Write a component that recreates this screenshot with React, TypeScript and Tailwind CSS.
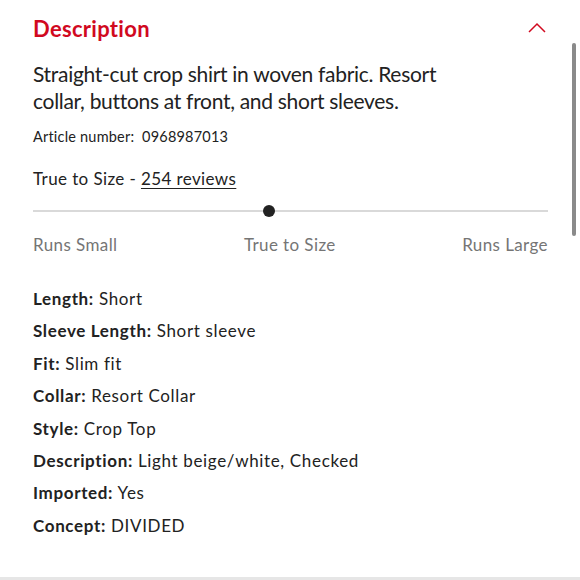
import React from "react";

const specs: [string, string][] = [
  ["Length", "Short"],
  ["Sleeve Length", "Short sleeve"],
  ["Fit", "Slim fit"],
  ["Collar", "Resort Collar"],
  ["Style", "Crop Top"],
  ["Description", "Light beige/white, Checked"],
  ["Imported", "Yes"],
  ["Concept", "DIVIDED"],
];

export default function App() {
  return (
    <div className="relative h-[580px] w-[580px] overflow-hidden bg-white font-['Lato',sans-serif] text-[#222]">
      <div className="px-[33px] pr-[32px] pt-[13px]">
        <div className="flex h-[30px] items-center justify-between">
          <h2 className="text-[22px] font-bold tracking-[0.3px] text-[#d1091f]">Description</h2>
          <svg width="18" height="12" viewBox="0 0 18 12" className="mr-[2px] text-[#d1091f]">
            <path d="M1 10 L9 2 L17 10" fill="none" stroke="currentColor" strokeWidth="1.5" />
          </svg>
        </div>

        <p className="mt-[17px] max-w-[450px] text-[21px] leading-[27px] tracking-[-0.3px] text-[#222]">
          Straight-cut crop shirt in woven fabric. Resort collar, buttons at front, and short sleeves.
        </p>

        <p className="mt-[13px] text-[14.5px] leading-[20px] tracking-[0.2px]">
          Article number:&nbsp; 0968987013
        </p>

        <p className="mt-[21px] text-[17px] leading-[22px] tracking-[0.4px]">
          True to Size - <span className="underline underline-offset-[3px]">254 reviews</span>
        </p>

        <div className="relative mt-[20px] h-[2px] bg-[#d9d9d9]">
          <div className="absolute left-[230px] top-[-5px] h-[12px] w-[12px] rounded-full bg-[#222]" />
        </div>

        <div className="mt-[22px] flex justify-between text-[17px] leading-[22px] tracking-[0.4px] text-[#757575]">
          <span>Runs Small</span>
          <span>True to Size</span>
          <span>Runs Large</span>
        </div>

        <ul className="mt-[32px] flex flex-col gap-[10.4px] text-[17px] leading-[22px] tracking-[0.65px]">
          {specs.map(([k, v]) => (
            <li key={k}>
              <span className="font-bold">{k}:</span> {v}
            </li>
          ))}
        </ul>
      </div>

      <div className="absolute right-[4px] top-[43px] h-[193px] w-[4px] rounded-full bg-[#8a8a8a]" />
      <div className="absolute bottom-0 left-0 h-[3px] w-full bg-[#e6e6e6]" />
    </div>
  );
}
